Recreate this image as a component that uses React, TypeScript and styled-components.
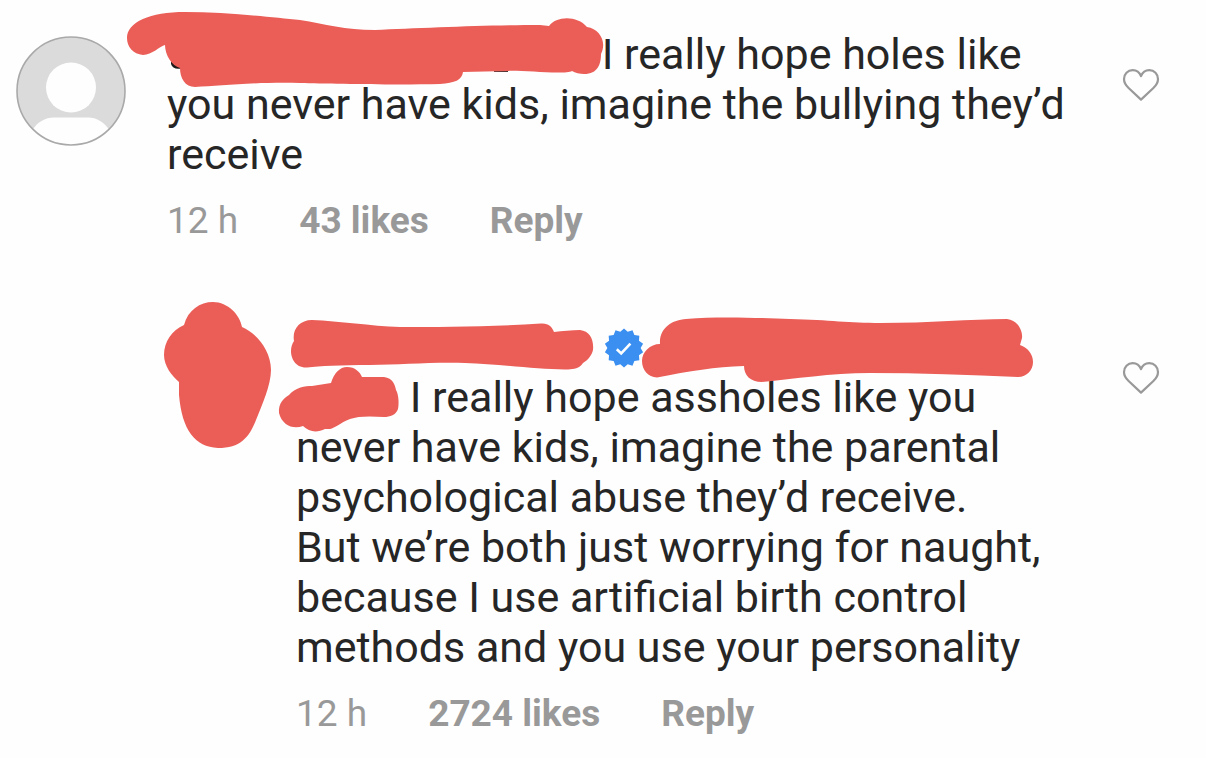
import React from 'react';
import styled, { createGlobalStyle } from 'styled-components';

const GlobalStyle = createGlobalStyle`
  body {
    margin: 0;
    background: #fefefe;
    color: #262626;
    font-family: Roboto, "Liberation Sans", sans-serif;
  }
`;

const MARKER = '#eb5e58';

const Thread = styled.main`
  display: flex;
  flex-direction: column;
  gap: 79px;
  padding: 29px 46px 16px 16px;
`;

const Comment = styled.article<{ $nested?: boolean }>`
  display: flex;
  align-items: flex-start;
  gap: 41px;
  padding-left: ${(p) => (p.$nested ? 149 : 0)}px;
`;

const Avatar = styled.div<{ $size: number }>`
  position: relative;
  flex: none;
  width: ${(p) => p.$size}px;
  height: ${(p) => p.$size}px;
  margin-top: 7px;

  > svg {
    display: block;
  }
`;

const Body = styled.div`
  flex: 1;
  min-width: 0;
`;

const Text = styled.p`
  margin: 0 0 20px;
  font-size: 43px;
  line-height: 50px;
`;

const Meta = styled.div`
  display: flex;
  gap: 61px;
  color: #999;
  font-size: 37px;
  line-height: 44px;
`;

const MetaButton = styled.button`
  padding: 0;
  border: 0;
  background: none;
  color: inherit;
  font: inherit;
  font-weight: 700;
  cursor: pointer;
`;

const LikeButton = styled.button`
  display: flex;
  flex: none;
  margin-top: 38px;
  padding: 0;
  border: 0;
  background: none;
  cursor: pointer;
`;

const Redacted = styled.span<{ $width: number }>`
  position: relative;
  display: inline-block;
  width: ${(p) => p.$width}px;
  height: 50px;
  vertical-align: top;
`;

const Scribble = styled.svg<{ $left: number; $top: number }>`
  position: absolute;
  left: ${(p) => p.$left}px;
  top: ${(p) => p.$top}px;
  pointer-events: none;
`;

const Badge = styled.svg`
  height: 50px;
  vertical-align: top;
`;

function Heart() {
  return (
    <LikeButton type="button" aria-label="Like comment">
      <svg width="38" height="36" viewBox="0 0 38 36" fill="none" stroke="#999" strokeWidth="2.2" strokeLinejoin="round">
        <path d="M19 9.2C17.4 5 14.2 3.1 10.7 3.1C5.7 3.1 2 7 2 12C2 15.6 3.8 18.4 6.6 21L19 32.6L31.4 21C34.2 18.4 36 15.6 36 12C36 7 32.3 3.1 27.3 3.1C23.8 3.1 20.6 5 19 9.2Z" />
      </svg>
    </LikeButton>
  );
}

const badgePoints = Array.from({ length: 28 }, (_, i) => {
  const r = i % 2 ? 16.6 : 19.6;
  const a = (i * Math.PI) / 14;
  return `${(20 + r * Math.sin(a)).toFixed(2)},${(26 - r * Math.cos(a)).toFixed(2)}`;
}).join(' ');

function Verified() {
  return (
    <Badge width="40" height="50" viewBox="0 0 40 50" role="img" aria-label="Verified">
      <polygon points={badgePoints} fill="#3a8ff0" />
      <path d="M12.8 27.2L17.2 31.4L26.4 21.6" fill="none" stroke="#fff" strokeWidth="2.6" />
    </Badge>
  );
}

function Footer({ likes }: { likes: string }) {
  return (
    <Meta>
      <time>12 h</time>
      <MetaButton type="button">{likes}</MetaButton>
      <MetaButton type="button">Reply</MetaButton>
    </Meta>
  );
}

export default function App() {
  return (
    <>
      <GlobalStyle />
      <Thread>
        <Comment>
          <Avatar $size={110}>
            <svg width="110" height="110" viewBox="0 0 110 110" role="img" aria-label="Default profile picture">
              <defs>
                <clipPath id="avatar-clip">
                  <circle cx="55" cy="55" r="54" />
                </clipPath>
              </defs>
              <circle cx="55" cy="55" r="54" fill="#dbdbdb" />
              <g clipPath="url(#avatar-clip)" fill="#fefefe">
                <circle cx="55" cy="51.5" r="25" />
                <path d="M16 95C21 86 29 81.500 38 81.500H72C81 81.500 88 86 94 95V112H16Z" />
              </g>
              <circle cx="55" cy="55" r="54" fill="none" stroke="#a9a9a9" strokeWidth="1.6" />
            </svg>
          </Avatar>
          <Body>
            <Text>
              <Redacted $width={424}>
                <Scribble $left={-47} $top={-19} width="490" height="80" viewBox="120 10 490 80" aria-hidden="true">
                  <path d="M171 64C172 68 176 69.500 181 68.500V60H171Z" fill="#1b1b1b" />
                  <path d="M494 70H508V72H494Z" fill="#4a3535" />
                  <path
                    fill={MARKER}
                    d="M127 38C127 22 150 12 185 12C225 12 270 17 300 20C325 24 345 30 375 30C420 28 490 25 540 25L549 26C556 16 577 15 587 27C600 29 607 42 601 54C601 64 598 74 584 74C580 74 575 73 572 71C565 75 520 70 508 71L463 72C462 80 455 83 440 84C400 85 330 84 300 83C250 82 220 86 195 87C185 87 180 78 180 68C172 66 165 55 165 45C160 46 152 55 143 55C133 54 127 47 127 38Z"
                  />
                </Scribble>
              </Redacted>{' '}
              I really hope holes like you never have kids, imagine the bullying they’d receive
            </Text>
            <Footer likes="43 likes" />
          </Body>
          <Heart />
        </Comment>

        <Comment $nested>
          <Avatar $size={90}>
            <Scribble $left={-5} $top={-29} width="115" height="150" viewBox="160 300 115 150" aria-hidden="true">
              <path
                fill={MARKER}
                d="M184 325C188 310 200 302 213 302C228 302 240 315 242 327C256 333 271 350 271 370C271 385 262 405 256 420C249 438 240 448 218 448C195 447 182 430 179 395L179 382C172 376 164 366 164 355C164 342 172 330 184 325Z"
              />
            </Scribble>
          </Avatar>
          <Body>
            <Text>
              <Redacted $width={308}>
                <Scribble $left={-11} $top={-7} width="315" height="60" viewBox="285 315 315 60" aria-hidden="true">
                  <path
                    fill={MARKER}
                    d="M294 341C292 330 299 320 312 320C340 321 370 326 400 327C440 327 490 327 541 323.500C549 323 552 327 554 332C562 331 572 330 580 330C590 331 594 340 593 350C592 355 588 360 583 363C579 369 574 369 568 369.500C540 370 500 364 465 363C430 362 400 365 370 365C340 365 320 366 307 367.500C295 368 291 358 291 351C291 347 292 344 294 341Z"
                  />
                </Scribble>
              </Redacted>
              <Verified />
              <Redacted $width={390}>
                <Scribble $left={-4} $top={-7} width="400" height="70" viewBox="640 315 400 70" aria-hidden="true">
                  <path
                    fill={MARKER}
                    d="M660 344C659 328 672 320 686 319C720 316 760 318 790 319C830 320 850 323 880 323C930 323 970 319 1007 319C1017 320 1023 330 1022 338L1020 345C1028 348 1033 354 1033 362C1033 370 1027 377 1018 377C970 375 920 373 870 373C830 373 795 379 762 382C750 382 744 375 744 366C715 367 690 371 657 377.500C648 377 642 370 642 361C642 352 650 344 660 344Z"
                  />
                </Scribble>
              </Redacted>
              <Redacted $width={103}>
                <Scribble $left={-21} $top={-12} width="130" height="80" viewBox="275 360 130 80" aria-hidden="true">
                  <path
                    fill={MARKER}
                    d="M331 383C334 373 340 367 347 367C355 367 360 372 362 377L384 377C393 378 395 385 396 390C399 395 399 405 398 409C396 415 390 417 384 417C370 416 358 416 350 419C340 423 335 428 330 429L325 429C317 433 309 432 303 426C293 430 282 425 279 413C278 403 284 398 289 395C296 387 305 386 312 386Z"
                  />
                </Scribble>
              </Redacted>{' '}
              I really hope assholes like you never have kids, imagine the parental psychological abuse they’d receive.
              <br />
              But we’re both just worrying for naught, because I use artificial birth control methods and you use your
              personality
            </Text>
            <Footer likes="2724 likes" />
          </Body>
          <Heart />
        </Comment>
      </Thread>
    </>
  );
}
